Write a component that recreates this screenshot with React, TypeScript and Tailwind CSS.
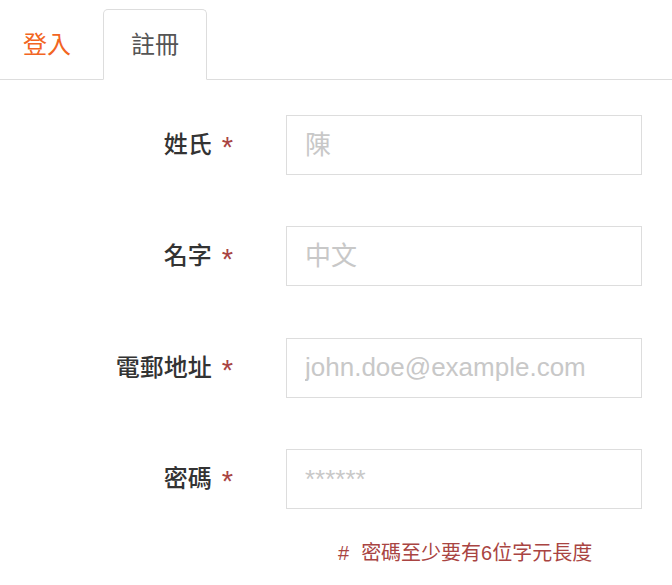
import { useState } from "react";

const fields = [
  { label: "姓氏", placeholder: "陳", type: "text" },
  { label: "名字", placeholder: "中文", type: "text" },
  { label: "電郵地址", placeholder: "john.doe@example.com", type: "email" },
  { label: "密碼", placeholder: "******", type: "password" },
];

export default function App() {
  const [tab, setTab] = useState("register");

  return (
    <div className="w-[672px] min-h-[585px] bg-white font-['Liberation_Sans','Noto_Sans_CJK_TC',sans-serif]">
      {/* tabs */}
      <ul className="flex items-end h-[80px] border-b border-[#ddd]">
        <li
          onClick={() => setTab("login")}
          className="-mb-px h-[71px] w-[103px] pl-[23px] flex items-center text-[24px] text-[#f26522] cursor-pointer"
        >
          登入
        </li>
        <li
          onClick={() => setTab("register")}
          className="-mb-px h-[71px] w-[104px] flex items-center justify-center text-[24px] text-[#555] bg-white border border-[#ddd] border-b-white rounded-t-[5px] cursor-pointer"
        >
          註冊
        </li>
      </ul>

      {/* form */}
      <form className="mt-[35px] flex flex-col gap-[51.4px]">
        {fields.map((f) => (
          <div key={f.label} className="flex items-center">
            <label className="w-[233px] flex justify-end items-center text-[24px] font-medium text-[#333]">
              {f.label}
              <span className="ml-[10px] relative top-[3px] text-[29px] text-[#a94442]">*</span>
            </label>
            <input
              type={f.type}
              placeholder={f.placeholder}
              className="ml-[53px] w-[356px] h-[60px] pl-[18px] border border-[#ddd] text-[26px] text-[#333] outline-none placeholder:text-[#c8c8c8]"
            />
          </div>
        ))}
      </form>

      <p className="mt-[28px] pl-[338px] text-[20px] leading-[32px] text-[#a94442]">
        <span className="mr-[12px]">#</span>
        密碼至少要有6位字元長度
      </p>
    </div>
  );
}
